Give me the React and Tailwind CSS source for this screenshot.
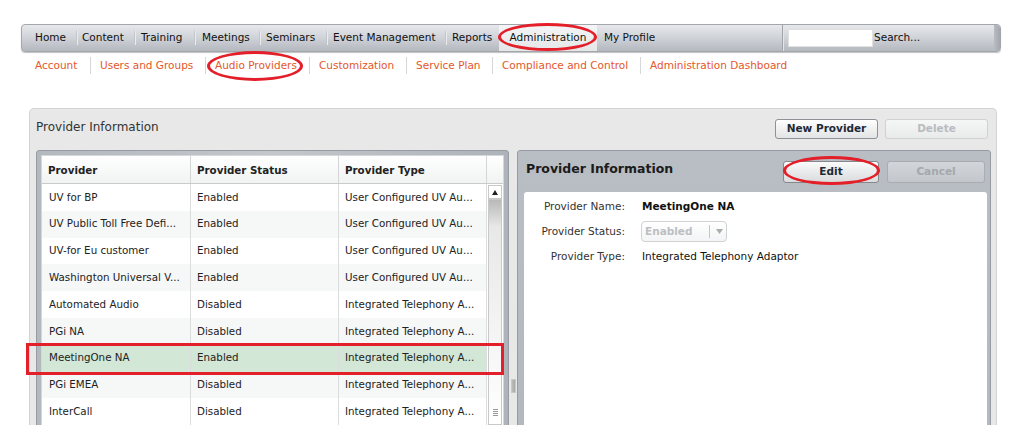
export default function App() {
  const topItems = [
    { t: "Home", w: 41, s: 5 },
    { t: "Content", w: 52, s: 6 },
    { t: "Training", w: 53, s: 7 },
    { t: "Meetings", w: 57, s: 6 },
    { t: "Seminars", w: 60, s: 6 },
    { t: "Event Management", w: 112, s: 6 },
  ];
  const subItems = [
    { t: "Account", w: 55 },
    { t: "Users and Groups", w: 105 },
    { t: "Audio Providers", w: 94 },
    { t: "Customization", w: 87 },
    { t: "Service Plan", w: 76 },
    { t: "Compliance and Control", w: 138 },
  ];
  const rows = [
    ["UV for BP", "Enabled", "User Configured UV Au..."],
    ["UV Public Toll Free Defi...", "Enabled", "User Configured UV Au..."],
    ["UV-for Eu customer", "Enabled", "User Configured UV Au..."],
    ["Washington Universal V...", "Enabled", "User Configured UV Au..."],
    ["Automated Audio", "Disabled", "Integrated Telephony A..."],
    ["PGi NA", "Disabled", "Integrated Telephony A..."],
    ["MeetingOne NA", "Enabled", "Integrated Telephony A..."],
    ["PGi EMEA", "Disabled", "Integrated Telephony A..."],
    ["InterCall", "Disabled", "Integrated Telephony A..."],
  ];

  return (
    <div className="relative w-[1023px] h-[443px] overflow-hidden bg-white font-['DejaVu_Sans',Verdana,sans-serif] text-[#222]">
      {/* Top nav */}
      <div className="mt-[24px] ml-[21px] w-[980px] h-[28px] flex items-center rounded-[4px] border border-[#a3a7ad] bg-gradient-to-b from-[#e6e8eb] via-[#cfd2d7] to-[#b4b8bf] shadow-[0_1px_1px_rgba(0,0,0,0.25)] text-[10.5px] text-[#111]">
        <div className="w-[13px] shrink-0" />
        {topItems.map((it) => (
          <div key={it.t} className="flex items-center shrink-0">
            <span className="whitespace-nowrap" style={{ width: it.w }}>{it.t}</span>
            <span className="w-px h-[14px] bg-[#c2c5ca] shadow-[1px_0_0_#e9ebee]" />
            <span style={{ width: it.s }} />
          </div>
        ))}
        <span className="w-[47px] shrink-0 whitespace-nowrap">Reports</span>
        <div className="w-[98px] h-full shrink-0 flex items-center justify-center bg-gradient-to-b from-[#f4f5f6] to-[#e4e6e8]">
          Administration
        </div>
        <span className="w-[185px] shrink-0 pl-[7px] whitespace-nowrap">My Profile</span>
        <span className="w-px h-full shrink-0 bg-[#a0a4aa] shadow-[1px_0_0_#e3e5e8]" />
        <div className="w-[5px] shrink-0" />
        <div className="w-[85px] h-[18px] shrink-0 bg-white border border-[#e0e0e0]" />
        <span className="pl-px whitespace-nowrap">Search...</span>
        <div className="flex-1" />
        <div className="w-[6px] h-full rounded-r-[4px] bg-gradient-to-r from-[#b9bdc3] to-[#a2a6ad]" />
      </div>

      {/* Sub nav */}
      <div className="h-[27px] pl-[35px] flex items-center text-[10.5px] text-[#e4572a]">
        {subItems.map((it) => (
          <div key={it.t} className="flex items-center shrink-0">
            <span className="whitespace-nowrap" style={{ width: it.w }}>{it.t}</span>
            <span className="w-px h-[17px] bg-[#d6d6d6]" />
            <span className="w-[9px]" />
          </div>
        ))}
        <span className="whitespace-nowrap">Administration Dashboard</span>
      </div>

      {/* Main panel */}
      <div className="mt-[29px] ml-[29px] w-[968px] h-[317px] overflow-hidden rounded-t-[5px] border border-b-0 border-[#d2d3d2] bg-[#e7e8e7]">
        <div className="h-[41px] pt-[10px] pl-[6px] pr-[8px] flex items-start">
          <span className="text-[12px] leading-[16px] text-[#333]">Provider Information</span>
          <div className="flex-1" />
          <button className="w-[103px] h-[20px] rounded-[3px] border border-[#8e9296] bg-gradient-to-b from-white to-[#e2e3e4] text-[10.5px] font-bold text-[#1d2b36]">
            New Provider
          </button>
          <button className="ml-[7px] w-[103px] h-[20px] rounded-[3px] border border-[#cfd1d3] bg-gradient-to-b from-[#f5f6f6] to-[#e9eaea] text-[10.5px] font-bold text-[#b9bcbf]">
            Delete
          </button>
        </div>

        <div className="flex pl-[6px] items-start">
          {/* Left table frame */}
          <div className="w-[473px] h-[280px] shrink-0 rounded-t-[3px] border border-[#979ca3] bg-gradient-to-r from-[#b3b8be] via-[#c3c7cc] to-[#aeb3b9] p-[5px]">
            <div className="w-[461px] h-[274px] bg-white shadow-[0_0_0_1px_#d5d8db] text-[10.3px]">
              <div className="flex h-[28px] border-b border-[#c9cbcd] bg-gradient-to-b from-white to-[#f1f2f2] font-bold text-[10.3px]">
                <div className="w-[149px] pl-[6px] pt-[2px] flex items-center border-r border-[#d3d5d7]">Provider</div>
                <div className="w-[148px] pl-[6px] pt-[2px] flex items-center border-r border-[#d3d5d7]">Provider Status</div>
                <div className="w-[148px] pl-[6px] pt-[2px] flex items-center border-r border-[#d3d5d7]">Provider Type</div>
                <div className="w-[16px]" />
              </div>
              <div className="flex">
                <div className="w-[445px]">
                  {rows.map((r, i) => (
                    <div
                      key={i}
                      className={
                        "flex h-[26.8px] " +
                        (i === 6 ? "bg-[#d2e7d6]" : i % 2 === 1 ? "bg-[#f6f7f7]" : "bg-white")
                      }
                    >
                      <div className="w-[149px] pl-[7px] flex items-center border-r border-[#dadcde] whitespace-nowrap">{r[0]}</div>
                      <div className="w-[148px] pl-[6px] flex items-center border-r border-[#dadcde] whitespace-nowrap">{r[1]}</div>
                      <div className="w-[148px] pl-[6px] flex items-center border-r border-[#dadcde] whitespace-nowrap">{r[2]}</div>
                    </div>
                  ))}
                </div>
                <div className="w-[16px] flex flex-col bg-white">
                  <div className="h-[14px] mx-[1px] mt-px flex items-center justify-center border border-[#c9c9c9] bg-white">
                    <svg width="6" height="5" viewBox="0 0 6 5"><path d="M3 0 L6 5 L0 5 Z" fill="#222" /></svg>
                  </div>
                  <div className="flex-1 mx-[1px] flex flex-col items-center border border-[#c9c9c9] bg-gradient-to-b from-[#b9b9b9] via-[#e8e8e8] via-[12%] to-white">
                    <div className="flex-1" />
                    <div className="flex flex-col gap-[1px] mb-[8px]">
                      <span className="w-[5px] h-px bg-[#999]" />
                      <span className="w-[5px] h-px bg-[#999]" />
                      <span className="w-[5px] h-px bg-[#999]" />
                      <span className="w-[5px] h-px bg-[#999]" />
                    </div>
                  </div>
                </div>
              </div>
            </div>
          </div>

          {/* Splitter */}
          <div className="w-[8px] h-[275px] shrink-0 flex flex-col items-center">
            <div className="h-[229px]" />
            <div className="w-[5px] h-[14px] bg-gradient-to-r from-[#bdbdbd] to-[#a9a9a9] border border-[#c8c8c8]" />
          </div>

          {/* Right panel */}
          <div className="w-[474px] h-[280px] shrink-0 rounded-t-[3px] border border-[#979ca3] bg-gradient-to-b from-[#b9bec4] to-[#b3b8be] pl-[6px] pr-[3px]">
            <div className="h-[41px] flex items-center">
              <span className="pl-[2px] -mt-[4px] text-[12.5px] font-bold text-[#1b1b1b]">Provider Information</span>
              <div className="flex-1" />
              <button className="w-[96px] h-[22px] rounded-[3px] border border-[#85898e] bg-gradient-to-b from-[#fafafa] to-[#d9dbdd] text-[10.5px] font-bold text-[#1d2b36]">
                Edit
              </button>
              <button className="ml-[8px] mr-[2px] w-[98px] h-[22px] rounded-[3px] border border-[#a8adb3] bg-gradient-to-b from-[#d2d5d9] to-[#c3c7cc] text-[10.5px] font-bold text-[#a3a8ad]">
                Cancel
              </button>
            </div>
            <div className="h-[240px] rounded-t-[3px] bg-white pt-[2px] text-[10.5px]">
              <div className="h-[25px] flex items-center">
                <span className="w-[101px] text-right text-[#333]">Provider Name:</span>
                <span className="ml-[17px] font-bold text-[#111]">MeetingOne NA</span>
              </div>
              <div className="h-[25px] flex items-center">
                <span className="w-[101px] text-right text-[#333]">Provider Status:</span>
                <div className="ml-[16px] w-[86px] h-[21px] rounded-[4px] border border-[#d0d2d4] bg-gradient-to-b from-white to-[#f3f4f5] flex items-center">
                  <span className="pl-[3px] w-[67px] font-bold text-[#bcbfc2]">Enabled</span>
                  <span className="w-px h-[13px] bg-[#c3c5c7]" />
                  <svg className="ml-[6px]" width="7" height="5" viewBox="0 0 7 5"><path d="M0 0 L7 0 L3.5 5 Z" fill="#a9acb0" /></svg>
                </div>
              </div>
              <div className="h-[25px] flex items-center">
                <span className="w-[101px] text-right text-[#333]">Provider Type:</span>
                <span className="ml-[17px] text-[#111]">Integrated Telephony Adaptor</span>
              </div>
            </div>
          </div>
        </div>
      </div>

      {/* Red annotation overlays */}
      <div className="absolute left-[498px] top-[23px] w-[99px] h-[28px] rounded-[50%] border-[3px] border-[#e3202a]" />
      <div className="absolute left-[207px] top-[51px] w-[96px] h-[30px] rounded-[50%] border-[3px] border-[#e3202a]" />
      <div className="absolute left-[783px] top-[156px] w-[97px] h-[29px] rounded-[50%] border-[3px] border-[#e3202a]" />
      <div className="absolute left-[26px] top-[343px] w-[478px] h-[32px] border-[3px] border-[#e3202a]" />
    </div>
  );
}
